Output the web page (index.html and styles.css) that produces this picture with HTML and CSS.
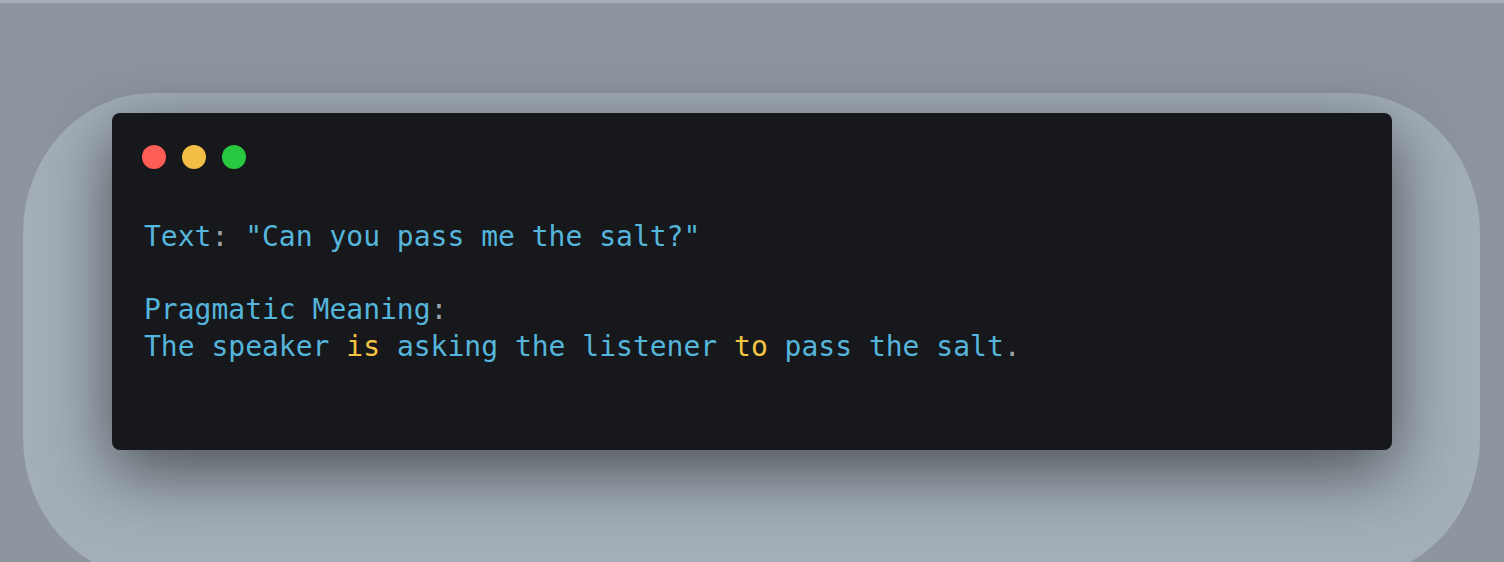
FILE: index.html
```html
<!DOCTYPE html>
<html lang="en">
<head>
<meta charset="utf-8">
<title>Pragmatic Meaning</title>
<link rel="stylesheet" href="styles.css">
</head>
<body>
  <div class="stage">
    <div class="halo">
      <div class="window">
        <div class="controls">
          <span class="dot dot-red"></span>
          <span class="dot dot-yellow"></span>
          <span class="dot dot-green"></span>
        </div>
        <pre class="code"><span class="t">Text</span><span class="p">:</span> <span class="t">"Can you pass me the salt?"</span>

<span class="t">Pragmatic Meaning</span><span class="p">:</span>
<span class="t">The speaker</span> <span class="k">is</span> <span class="t">asking the listener</span> <span class="k">to</span> <span class="t">pass the salt</span><span class="p">.</span></pre>
      </div>
    </div>
  </div>
</body>
</html>
```

FILE: styles.css
```css
html, body {
  margin: 0;
  padding: 0;
}

body {
  width: 1504px;
  height: 562px;
  overflow: hidden;
  background: #8d969f;
  border-top: 3px solid #a4aeb8;
  box-sizing: border-box;
}

.stage {
  padding: 90px 0 0 23px;
}

.halo {
  width: 1457px;
  height: 485px;
  box-sizing: border-box;
  padding: 20px 0 0 89px;
  background: #a3aeb8;
  border-radius: 130px / 140px;
}

.window {
  width: 1280px;
  height: 337px;
  box-sizing: border-box;
  padding: 32px 32px 0 30px;
  background: #17181b;
  border-radius: 8px;
  box-shadow: 0 20px 68px rgba(0, 0, 0, 0.55);
}

.controls {
  display: flex;
  gap: 16px;
  height: 24px;
}

.dot {
  width: 24px;
  height: 24px;
  border-radius: 50%;
  display: block;
}

.dot-red { background: #fd5d55; }
.dot-yellow { background: #f2be45; }
.dot-green { background: #28c840; }

.code {
  margin: 50px 0 0 2px;
  font-family: "DejaVu Sans Mono", "Liberation Mono", monospace;
  font-size: 28px;
  line-height: 36.5px;
  color: #55b5db;
  white-space: pre;
}

.t { color: #55b5db; }
.p { color: #9ba3ab; }
.k { color: #f4c542; }
```
